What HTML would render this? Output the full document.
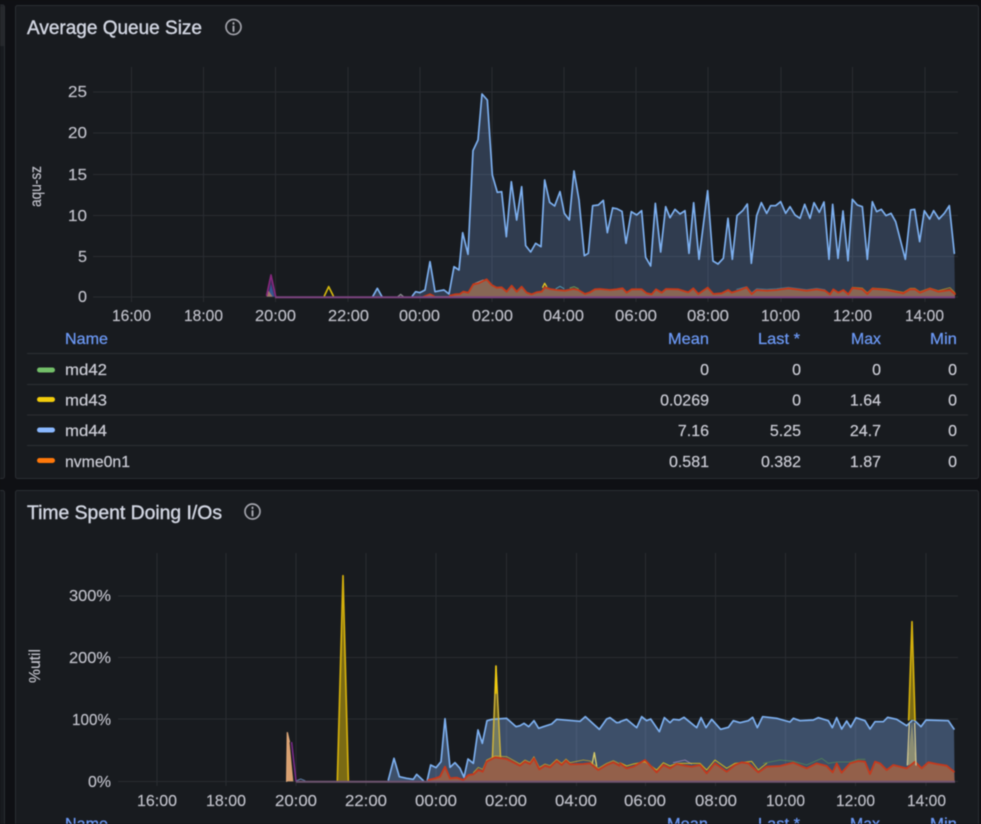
<!DOCTYPE html>
<html>
<head>
<meta charset="utf-8">
<style>
html,body{margin:0;padding:0;background:#0f1014;width:981px;height:824px;overflow:hidden}
svg{display:block;position:absolute;left:0;top:0;filter:blur(.45px)}
text{font-family:"Liberation Sans",sans-serif;fill:#cbccd5;stroke:#cbccd5;stroke-width:.2;font-size:16px}
.t{font-size:19px;fill:#d2d6e2;stroke:#d2d6e2;stroke-width:.4}
.h{fill:#6b98f4;stroke:#6b98f4;stroke-width:.25;font-size:16px}
.a{font-size:16px;fill:#c2c3cc;stroke:#c2c3cc;stroke-width:.15}
.grid line{stroke:#292c31;stroke-width:1}
.l{fill:none;stroke-linejoin:round;stroke-linecap:round}
</style>
</head>
<body>
<svg width="981" height="824" viewBox="0 0 981 824" xmlns="http://www.w3.org/2000/svg">
<rect width="981" height="824" fill="#0f1014"/>
<rect x="-4" y="5" width="8.5" height="473.500" rx="2" fill="#181b1f" stroke="#2a2d32"/>
<rect x="0" y="6" width="4" height="40" fill="#26282c"/>
<rect x="-4" y="490.500" width="8.500" height="345" rx="2" fill="#181b1f" stroke="#2a2d32"/>
<rect x="15.500" y="5.500" width="963" height="473" rx="2" fill="#181b1f" stroke="#2a2d32"/>
<rect x="15.500" y="490.500" width="963" height="345" rx="2" fill="#181b1f" stroke="#2a2d32"/>

<!-- titles -->
<text class="t" x="27" y="34" textLength="175" lengthAdjust="spacingAndGlyphs">Average Queue Size</text>
<g fill="none" stroke="#a2a3ab" stroke-width="1.700"><circle cx="233.500" cy="27" r="7.500"/><path d="M233.500 26.500v4.500M233.500 23v.8" stroke-linecap="round" stroke-width="2"/></g>
<text class="t" x="27" y="519" textLength="195" lengthAdjust="spacingAndGlyphs">Time Spent Doing I/Os</text>
<g fill="none" stroke="#a2a3ab" stroke-width="1.700"><circle cx="252.500" cy="511.500" r="7.500"/><path d="M252.500 511v4.500M252.500 507.500v.8" stroke-linecap="round" stroke-width="2"/></g>

<!-- chart 1 grid -->
<g class="grid">
<line x1="93" x2="958" y1="92" y2="92"/><line x1="93" x2="958" y1="133" y2="133"/><line x1="93" x2="958" y1="174.500" y2="174.500"/><line x1="93" x2="958" y1="215.500" y2="215.500"/><line x1="93" x2="958" y1="256.500" y2="256.500"/><line x1="93" x2="958" y1="297" y2="297"/>
<line x1="131.500" x2="131.500" y1="67" y2="302"/><line x1="203.500" x2="203.500" y1="67" y2="302"/><line x1="275.500" x2="275.500" y1="67" y2="302"/><line x1="348" x2="348" y1="67" y2="302"/><line x1="420" x2="420" y1="67" y2="302"/><line x1="492" x2="492" y1="67" y2="302"/><line x1="564" x2="564" y1="67" y2="302"/><line x1="636" x2="636" y1="67" y2="302"/><line x1="708" x2="708" y1="67" y2="302"/><line x1="781" x2="781" y1="67" y2="302"/><line x1="852.500" x2="852.500" y1="67" y2="302"/><line x1="925" x2="925" y1="67" y2="302"/>
</g>

<!-- chart 1 fills -->
<g opacity=".21" fill="#8ab8ff">
<polygon transform="translate(250 80) scale(.33333)" points="370,652 382,625 395,652"/>
<polygon transform="translate(250 80) scale(.33333)" points="487,652 497,635 510,638 525,630 540,545 555,635 570,632 582,630 597,642 612,560 627,570 638,458 654,523 669,212 684,180 696,42 712,60 727,285 742,337 755,335 769,470 784,305 800,420 815,320 827,497 842,516 857,490 873,500 884,300 899,367 914,378 930,335 943,400 958,420 972,273 987,360 1003,527 1015,520 1028,377 1045,375 1060,361 1072,458 1088,384 1088,652"/>
<polygon transform="translate(610 150) scale(.33333)" points="8,442 8,174 20,176 36,184 48,280 64,185 80,195 95,182 107,322 122,348 136,160 152,306 167,170 180,203 195,178 210,192 225,182 237,310 251,158 267,328 293,122 309,333 324,342 340,325 354,205 367,328 381,197 398,182 412,162 424,340 440,197 454,158 470,190 482,167 497,167 512,155 527,190 540,170 555,195 570,205 584,163 600,205 612,158 628,187 642,156 657,328 668,163 684,325 699,183 714,332 727,148 742,165 757,170 772,328 787,155 800,185 814,178 828,197 843,190 857,215 886,328 902,180 914,178 929,275 943,182 959,207 971,182 987,207 1003,190 1018,167 1033,310 1035,442"/>
</g>
<g class="l" stroke="#7db0f0" stroke-width="5">
<polyline transform="translate(250 80) scale(.33333)" points="368,650 382,625 396,650"/>
<polyline transform="translate(250 80) scale(.33333)" points="487,648 497,635 510,638 525,630 540,545 555,635 570,632 582,630 597,642 612,560 627,570 638,458 654,523 669,212 684,180 696,42 712,60 727,285 742,337 755,335 769,470 784,305 800,420 815,320 827,497 842,516 857,490 873,500 884,300 899,367 914,378 930,335 943,400 958,420 972,273 987,360 1003,527 1015,520 1028,377 1045,375 1060,361 1072,458 1088,384"/>
<polyline transform="translate(610 150) scale(.33333)" points="8,174 20,176 36,184 48,280 64,185 80,195 95,182 107,322 122,348 136,160 152,306 167,170 180,203 195,178 210,192 225,182 237,310 251,158 267,328 293,122 309,333 324,342 340,325 354,205 367,328 381,197 398,182 412,162 424,340 440,197 454,158 470,190 482,167 497,167 512,155 527,190 540,170 555,195 570,205 584,163 600,205 612,158 628,187 642,156 657,328 668,163 684,325 699,183 714,332 727,148 742,165 757,170 772,328 787,155 800,185 814,178 828,197 843,190 857,215 886,328 902,180 914,178 929,275 943,182 959,207 971,182 987,207 1003,190 1018,167 1033,310"/>
</g>
<!-- chart 1 low series -->
<g transform="translate(450 270) scale(.33333)">
<polygon fill="#876755" points="0,81 0,77 15,73 30,72 40,65 55,68 70,43 85,38 110,28 125,45 140,53 155,52 170,65 185,47 200,65 215,50 230,68 245,73 260,67 275,65 285,52 300,57 320,60 345,62 370,57 385,60 405,72 420,67 435,58 450,57 480,60 480,81"/>
<polyline class="l" stroke="#9a9c9c" stroke-width="3" points="75,40 85,36 100,30"/>
<polyline class="l" stroke="#e8c820" stroke-width="4" points="278,52 284,40 290,50"/>
<polyline class="l" stroke="#4f96b0" stroke-width="3" points="318,56 330,49 342,56"/>
<polyline class="l" stroke="#6f9a50" stroke-width="3" points="360,54 372,50 385,56"/>
<polyline class="l" stroke="#c63a1a" stroke-width="5.500" points="0,77 15,73 30,72 40,65 55,68 70,43 85,40 110,28 125,45 140,53 155,52 170,65 185,47 200,65 215,50 230,68 245,73 260,67 275,65 285,52 300,57 320,60 345,62 370,57 385,60 405,72 420,67 435,58 450,57 480,60"/>
</g>
<g transform="translate(250 80) scale(.33333)">
<polygon fill="#876755" points="500,652 525,648 540,642 552,648 600,648 600,652"/>
<polyline class="l" stroke="#c63a1a" stroke-width="4" points="520,650 540,642 552,648"/>
<polyline class="l" stroke="#8b8d90" stroke-width="4" points="444,650 452,643 460,650"/>
</g>
<g transform="translate(610 150) scale(.33333)">
<polygon fill="#876755" points="0,442 0,420 20,418 38,415 50,428 65,418 95,418 110,430 125,433 138,418 155,428 168,417 205,418 235,427 250,415 265,432 293,413 310,432 335,430 355,420 365,428 390,420 410,412 425,432 440,420 470,422 500,420 535,415 590,422 620,418 645,422 660,433 670,418 685,428 700,420 715,433 727,414 757,418 772,432 787,416 830,420 880,430 900,418 915,418 930,428 960,416 985,425 1020,420 1035,432 1035,442"/>
<polyline class="l" stroke="#d8b020" stroke-width="2.500" opacity=".7" points="727,412 757,414 772,428 787,414 830,417 880,427 900,415 915,415 930,425 960,414 985,422 1020,413 1035,428"/>
<polyline class="l" stroke="#4f96b0" stroke-width="2.500" opacity=".7" points="380,418 410,410 425,428 440,416 470,418 500,416 535,412 590,419 620,415 645,419"/>
<polyline class="l" stroke="#c63a1a" stroke-width="5.500" points="0,420 20,418 38,415 50,428 65,418 95,418 110,430 125,433 138,418 155,428 168,417 205,418 235,427 250,415 265,432 293,413 310,432 335,430 355,420 365,428 390,420 410,412 425,432 440,420 470,422 500,420 535,415 590,422 620,418 645,422 660,433 670,418 685,428 700,420 715,433 727,414 757,418 772,432 787,416 830,420 880,430 900,418 915,418 930,428 960,416 985,425 1020,420 1035,432"/>
</g>
<!-- chart 1 left spikes and base band -->
<g transform="translate(260 270) scale(.33333)">
<polygon fill="#3d2a58" points="20,80 33,15 47,80"/>
<polygon fill="#35578f" points="24,80 33,42 43,80"/>
<polygon fill="#a07868" points="20,80 24,60 38,80"/>
<polyline class="l" stroke="#86287e" stroke-width="5" points="20,76 33,15 47,80"/>
<polyline class="l" stroke="#d4b80c" stroke-width="5" points="193,78 206,50 220,78"/>
</g>
<line x1="275" x2="955" y1="297.200" y2="297.200" stroke="#7c4480" stroke-width="2"/>

<!-- chart 1 axes -->
<text class="a" x="68" y="97" textLength="19" lengthAdjust="spacingAndGlyphs">25</text>
<text class="a" x="68" y="138" textLength="19" lengthAdjust="spacingAndGlyphs">20</text>
<text class="a" x="68" y="180" textLength="19" lengthAdjust="spacingAndGlyphs">15</text>
<text class="a" x="68" y="221" textLength="19" lengthAdjust="spacingAndGlyphs">10</text>
<text class="a" x="78" y="262" textLength="9" lengthAdjust="spacingAndGlyphs">5</text>
<text class="a" x="78" y="302" textLength="9" lengthAdjust="spacingAndGlyphs">0</text>
<text class="a" transform="translate(41 207) rotate(-90)" textLength="41" lengthAdjust="spacingAndGlyphs">aqu-sz</text>
<g>
<text class="a" x="112" y="321" textLength="39" lengthAdjust="spacingAndGlyphs">16:00</text>
<text class="a" x="184" y="321" textLength="39" lengthAdjust="spacingAndGlyphs">18:00</text>
<text class="a" x="255" y="321" textLength="41" lengthAdjust="spacingAndGlyphs">20:00</text>
<text class="a" x="328" y="321" textLength="41" lengthAdjust="spacingAndGlyphs">22:00</text>
<text class="a" x="399" y="321" textLength="41" lengthAdjust="spacingAndGlyphs">00:00</text>
<text class="a" x="472" y="321" textLength="41" lengthAdjust="spacingAndGlyphs">02:00</text>
<text class="a" x="543" y="321" textLength="41" lengthAdjust="spacingAndGlyphs">04:00</text>
<text class="a" x="615" y="321" textLength="42" lengthAdjust="spacingAndGlyphs">06:00</text>
<text class="a" x="687" y="321" textLength="42" lengthAdjust="spacingAndGlyphs">08:00</text>
<text class="a" x="761" y="321" textLength="39" lengthAdjust="spacingAndGlyphs">10:00</text>
<text class="a" x="833" y="321" textLength="39" lengthAdjust="spacingAndGlyphs">12:00</text>
<text class="a" x="905" y="321" textLength="39" lengthAdjust="spacingAndGlyphs">14:00</text>
</g>

<!-- legend 1 -->
<text class="h" x="65" y="344" textLength="43" lengthAdjust="spacingAndGlyphs">Name</text>
<text class="h" x="668" y="344" textLength="41" lengthAdjust="spacingAndGlyphs">Mean</text>
<text class="h" x="758" y="344" textLength="42" lengthAdjust="spacingAndGlyphs">Last *</text>
<text class="h" x="851" y="344" textLength="30" lengthAdjust="spacingAndGlyphs">Max</text>
<text class="h" x="930" y="344" textLength="27" lengthAdjust="spacingAndGlyphs">Min</text>
<g stroke="#2c2f34"><line x1="27" x2="968" y1="353.500" y2="353.500"/><line x1="27" x2="968" y1="384.500" y2="384.500"/><line x1="27" x2="968" y1="415" y2="415"/><line x1="27" x2="968" y1="445.500" y2="445.500"/></g>
<rect x="37" y="367.500" width="18" height="5" rx="2.500" fill="#73bf69"/>
<rect x="37" y="397" width="18" height="5" rx="2.500" fill="#f2cc0c"/>
<rect x="37" y="427.500" width="18" height="5" rx="2.500" fill="#8ab8ff"/>
<rect x="37" y="458" width="18" height="5" rx="2.500" fill="#ff780a"/>
<text x="65" y="375" textLength="42" lengthAdjust="spacingAndGlyphs">md42</text>
<text x="65" y="405.500" textLength="42" lengthAdjust="spacingAndGlyphs">md43</text>
<text x="65" y="436" textLength="42" lengthAdjust="spacingAndGlyphs">md44</text>
<text x="65" y="467" textLength="65" lengthAdjust="spacingAndGlyphs">nvme0n1</text>
<g text-anchor="end">
<text x="709" y="375">0</text><text x="801" y="375">0</text><text x="881" y="375">0</text><text x="957" y="375">0</text>
<text x="709" y="405.500">0.0269</text><text x="801" y="405.500">0</text><text x="881" y="405.500">1.64</text><text x="957" y="405.500">0</text>
<text x="709" y="436">7.16</text><text x="801" y="436">5.25</text><text x="881" y="436">24.7</text><text x="957" y="436">0</text>
<text x="709" y="467">0.581</text><text x="801" y="467">0.382</text><text x="881" y="467">1.87</text><text x="957" y="467">0</text>
</g>

<!-- chart 2 grid -->
<g class="grid">
<line x1="118" x2="958" y1="596" y2="596"/><line x1="118" x2="958" y1="657.500" y2="657.500"/><line x1="118" x2="958" y1="719" y2="719"/><line x1="118" x2="958" y1="781.500" y2="781.500"/>
<line x1="157" x2="157" y1="553" y2="786"/><line x1="226" x2="226" y1="553" y2="786"/><line x1="296" x2="296" y1="553" y2="786"/><line x1="366" x2="366" y1="553" y2="786"/><line x1="436" x2="436" y1="553" y2="786"/><line x1="506.500" x2="506.500" y1="553" y2="786"/><line x1="576.500" x2="576.500" y1="553" y2="786"/><line x1="645.500" x2="645.500" y1="553" y2="786"/><line x1="715.500" x2="715.500" y1="553" y2="786"/><line x1="785.500" x2="785.500" y1="553" y2="786"/><line x1="855.500" x2="855.500" y1="553" y2="786"/><line x1="926" x2="926" y1="553" y2="786"/>
</g>

<!-- chart 2 yellow spikes behind -->
<g transform="translate(260 560) scale(.33333)">
<polygon fill="#7a6a14" points="232,664 249,47 265,664"/>
<polyline class="l" stroke="#d4b00c" stroke-width="5" points="232,662 249,47 265,662"/>
<polygon fill="#7a6a14" opacity=".8" points="695,600 708,318 722,600"/>
</g>

<!-- chart 2 blue -->
<g opacity=".33" fill="#8ab8ff">
<polygon transform="translate(260 560) scale(.33333)" points="385,665 385,660 402,595 418,650 440,655 460,658 470,643 490,662 490,665"/>
<polygon transform="translate(260 560) scale(.33333)" points="502,665 502,660 512,615 528,623 543,605 555,476 570,622 585,608 600,625 612,652 624,597 640,610 654,510 667,550 681,482 696,478 740,475 768,500 780,497 792,490 806,500 822,482 836,505 850,500 875,492 890,478 960,484 976,470 1018,508 1040,477 1050,473 1070,488 1080,487 1080,665"/>
<polygon transform="translate(620 600) scale(.33333)" points="0,545 0,365 20,358 50,383 65,350 80,362 92,357 118,395 133,353 150,368 160,358 178,360 192,352 230,383 243,353 258,383 275,358 302,388 325,382 340,362 360,368 385,362 398,352 412,383 428,350 470,355 510,366 520,355 540,362 580,360 595,353 625,362 637,383 650,353 665,387 680,363 692,382 708,353 735,362 750,387 765,365 790,365 803,352 830,358 860,377 880,358 903,380 918,360 985,362 1002,387 1004,545"/>
</g>
<g class="l" stroke="#7db0f0" stroke-width="5">
<polyline transform="translate(260 560) scale(.33333)" points="385,660 402,595 418,650 440,655 460,658 470,643 490,662"/>
<polyline transform="translate(260 560) scale(.33333)" points="502,660 512,615 528,623 543,605 555,476 570,622 585,608 600,625 612,652 624,597 640,610 654,510 667,550 681,482 696,478 740,475 768,500 780,497 792,490 806,500 822,482 836,505 850,500 875,492 890,478 960,484 976,470 1018,508 1040,477 1050,473 1070,488 1080,487"/>
<polyline transform="translate(620 600) scale(.33333)" points="0,365 20,358 50,383 65,350 80,362 92,357 118,395 133,353 150,368 160,358 178,360 192,352 230,383 243,353 258,383 275,358 302,388 325,382 340,362 360,368 385,362 398,352 412,383 428,350 470,355 510,366 520,355 540,362 580,360 595,353 625,362 637,383 650,353 665,387 680,363 692,382 708,353 735,362 750,387 765,365 790,365 803,352 830,358 860,377 880,358 903,380 918,360 985,362 1002,387"/>
</g>

<!-- chart 2 spikes over blue -->
<g transform="translate(260 560) scale(.33333)">
<polyline class="l" stroke="#cdb23a" stroke-width="4.500" points="697,600 708,318 722,600"/>
<polyline class="l" stroke="#f2cc0c" stroke-width="4" points="706,400 708,318 711,400"/>
<polyline class="l" stroke="#d8cc6a" stroke-width="4" points="996,615 1003,578 1010,618"/>
<polygon fill="#d9a070" points="80,664 82,518 88,540 100,664"/>
<polyline class="l" stroke="#dca678" stroke-width="4" points="80,664 82,518 88,545"/>
<polyline class="l" stroke="#7c2a8c" stroke-width="4.500" points="95,548 108,663"/>
<polyline class="l" stroke="#5f7fa8" stroke-width="3" points="110,662 122,657 135,662"/>
<polygon fill="#93604a" points="505,665 505,660 525,655 540,650 555,620 570,655 590,653 610,660 625,645 640,643 655,630 668,635 680,605 705,592 740,597 780,617 795,605 810,612 822,595 838,628 855,617 870,622 890,603 905,615 918,602 930,613 970,612 990,610 1015,630 1040,615 1060,607 1080,618 1080,665"/>
<polyline class="l" stroke="#d8b420" stroke-width="2.500" opacity=".8" points="640,638 655,622 668,628 680,600 705,588 740,590 780,612 795,600 810,607 822,590 838,622 855,612 870,617 890,598 905,610 918,597 930,608 970,600 990,603 1015,625 1040,610 1060,602 1080,612"/>
<polyline class="l" stroke="#c4391d" stroke-width="5.500" points="505,660 525,655 540,650 555,620 570,655 590,653 610,660 625,645 640,643 655,630 668,635 680,605 705,592 740,597 780,617 795,605 810,612 822,595 838,628 855,617 870,622 890,603 905,615 918,602 930,613 970,612 990,610 1015,630 1040,615 1060,607 1080,618"/>
</g>
<g transform="translate(620 600) scale(.33333)">
<polygon fill="#c0b878" opacity=".6" points="862,495 876,360 888,495"/>
<polygon fill="#93604a" points="0,545 0,490 20,505 40,500 75,480 110,517 130,495 150,505 170,492 195,497 215,500 240,495 260,520 285,490 320,515 345,495 365,487 385,490 415,517 440,500 480,498 520,488 560,505 590,490 620,498 638,517 650,490 665,518 690,490 715,483 735,485 750,522 765,485 780,490 800,510 820,495 860,505 885,485 905,505 925,487 950,492 980,497 1002,515 1004,545"/>
<polyline class="l" stroke="#b08ec8" stroke-width="2.500" opacity=".8" points="160,488 195,480 215,492"/>
<polyline class="l" stroke="#f2cc0c" stroke-width="3" opacity=".8" points="0,488 20,498 40,492 75,485 110,510 130,488 150,498 170,490 240,490 260,510 285,480 320,505 345,490 395,484 415,510 440,490"/>
<polyline class="l" stroke="#5a9a50" stroke-width="2.500" opacity=".7" points="430,490 480,480 520,484 560,495 605,475 625,490 650,486 690,486 715,478 735,478"/>
<polyline class="l" stroke="#c4391d" stroke-width="5.500" points="0,490 20,505 40,500 75,480 110,517 130,495 150,505 170,492 195,497 215,500 240,495 260,520 285,490 320,515 345,495 365,487 385,490 415,517 440,500 480,498 520,488 560,505 590,490 620,498 638,517 650,490 665,518 690,490 715,483 735,485 750,522 765,485 780,490 800,510 820,495 860,505 885,485 905,505 925,487 950,492 980,497 1002,515"/>
<polyline class="l" stroke="#cfc690" stroke-width="4" points="862,495 868,370"/>
<polyline class="l" stroke="#cfc690" stroke-width="4" points="884,370 888,495"/>
<polygon fill="#7a6a14" points="866,360 876,65 885,360"/>
<polyline class="l" stroke="#d4b00c" stroke-width="5" points="866,360 876,65 885,360"/>
</g>
<line x1="296" x2="955" y1="781.800" y2="781.800" stroke="#6f5470" stroke-width="2"/>

<!-- chart 2 axes -->
<text class="a" x="69" y="601" textLength="42" lengthAdjust="spacingAndGlyphs">300%</text>
<text class="a" x="69" y="663" textLength="42" lengthAdjust="spacingAndGlyphs">200%</text>
<text class="a" x="72" y="725" textLength="39" lengthAdjust="spacingAndGlyphs">100%</text>
<text class="a" x="88" y="787" textLength="23" lengthAdjust="spacingAndGlyphs">0%</text>
<text class="a" transform="translate(40 683) rotate(-90)" textLength="34" lengthAdjust="spacingAndGlyphs">%util</text>
<g>
<text class="a" x="137" y="806" textLength="40" lengthAdjust="spacingAndGlyphs">16:00</text>
<text class="a" x="206" y="806" textLength="40" lengthAdjust="spacingAndGlyphs">18:00</text>
<text class="a" x="275" y="806" textLength="42" lengthAdjust="spacingAndGlyphs">20:00</text>
<text class="a" x="345" y="806" textLength="42" lengthAdjust="spacingAndGlyphs">22:00</text>
<text class="a" x="415" y="806" textLength="42" lengthAdjust="spacingAndGlyphs">00:00</text>
<text class="a" x="485" y="806" textLength="42" lengthAdjust="spacingAndGlyphs">02:00</text>
<text class="a" x="555" y="806" textLength="42" lengthAdjust="spacingAndGlyphs">04:00</text>
<text class="a" x="624" y="806" textLength="42" lengthAdjust="spacingAndGlyphs">06:00</text>
<text class="a" x="695" y="806" textLength="42" lengthAdjust="spacingAndGlyphs">08:00</text>
<text class="a" x="766" y="806" textLength="39" lengthAdjust="spacingAndGlyphs">10:00</text>
<text class="a" x="836" y="806" textLength="39" lengthAdjust="spacingAndGlyphs">12:00</text>
<text class="a" x="907" y="806" textLength="39" lengthAdjust="spacingAndGlyphs">14:00</text>
</g>
<text class="h" x="65" y="829" textLength="43" lengthAdjust="spacingAndGlyphs">Name</text>
<text class="h" x="667" y="829" textLength="41" lengthAdjust="spacingAndGlyphs">Mean</text>
<text class="h" x="758" y="829" textLength="42" lengthAdjust="spacingAndGlyphs">Last *</text>
<text class="h" x="850" y="829" textLength="30" lengthAdjust="spacingAndGlyphs">Max</text>
<text class="h" x="930" y="829" textLength="27" lengthAdjust="spacingAndGlyphs">Min</text>
</svg>
</body>
</html>
